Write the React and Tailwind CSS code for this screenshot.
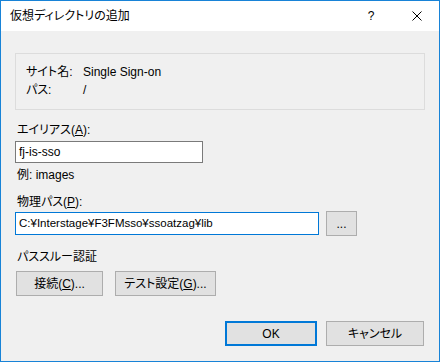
import React from 'react';

const Btn = ({ children, className = '' }) => (
    <div className={`h-[25px] flex items-center justify-center bg-[#e1e1e1] border border-[#adadad] ${className}`}>
        {children}
    </div>
);

const App = () => {
    return (
        <div
            className="w-[440px] h-[362px] border border-[#1883d7] bg-[#f0f0f0] flex flex-col text-[12px] text-black overflow-hidden [font-feature-settings:'palt']"
            style={{ fontFamily: '"Liberation Sans", "Noto Sans CJK JP", sans-serif' }}
        >
            {/* Title bar */}
            <div className="h-[30px] bg-white flex items-center pl-[9px] shrink-0">
                <span className="leading-[16px]">仮想ディレクトリの追加</span>
                <div className="ml-auto flex items-center h-full">
                    <span className="w-[46px] text-center text-[12px]">?</span>
                    <div className="w-[45px] h-full flex items-center justify-center">
                        <svg width="10" height="10" viewBox="0 0 10 10" fill="none" stroke="#000" strokeWidth="1">
                            <path d="M0.5 0.5 L9.5 9.5 M9.5 0.5 L0.5 9.5" />
                        </svg>
                    </div>
                </div>
            </div>

            {/* Body */}
            <div className="flex flex-col px-[14px]">
                {/* Info group */}
                <div className="mt-[22px] h-[57px] w-[410px] border border-[#dcdcdc] pl-[10px] pt-[9px] leading-[18px] grid grid-cols-[57px_1fr] content-start">
                    <span>サイト名:</span>
                    <span>Single Sign-on</span>
                    <span>パス:</span>
                    <span>/</span>
                </div>

                {/* Alias */}
                <div className="mt-[12px] pl-[2px] leading-[16px]">
                    エイリアス(<span className="underline">A</span>):
                </div>
                <div className="mt-[3px] w-[188px] h-[22px] border border-[#7a7a7a] bg-white flex items-center pl-[3px]">
                    fj-is-sso
                </div>
                <div className="mt-[4px] pl-[2px] leading-[16px]">例: images</div>

                {/* Physical path */}
                <div className="mt-[11px] pl-[2px] leading-[16px]">
                    物理パス(<span className="underline">P</span>):
                </div>
                <div className="mt-[1px] flex items-center">
                    <div className="w-[304px] h-[23px] border border-[#0078d7] bg-white flex items-center pl-[3px] text-[11.5px]">
                        C:¥Interstage¥F3FMsso¥ssoatzag¥lib
                    </div>
                    <Btn className="ml-[7px] w-[31px]">...</Btn>
                </div>

                {/* Pass-through auth */}
                <div className="mt-[13px] pl-[2px] leading-[16px]">パススルー認証</div>
                <div className="mt-[6px] flex pl-[1px]">
                    <Btn className="w-[87px]">
                        接続(<span className="underline">C</span>)...
                    </Btn>
                    <Btn className="ml-[12px] w-[101px]">
                        テスト設定(<span className="underline">G</span>)...
                    </Btn>
                </div>

                {/* Footer buttons */}
                <div className="mt-[25px] flex justify-end pr-[1px]">
                    <Btn className="w-[92px] !border-2 !border-[#0078d7]">OK</Btn>
                    <Btn className="ml-[9px] w-[98px]">キャンセル</Btn>
                </div>
            </div>
        </div>
    );
};

export default App;
